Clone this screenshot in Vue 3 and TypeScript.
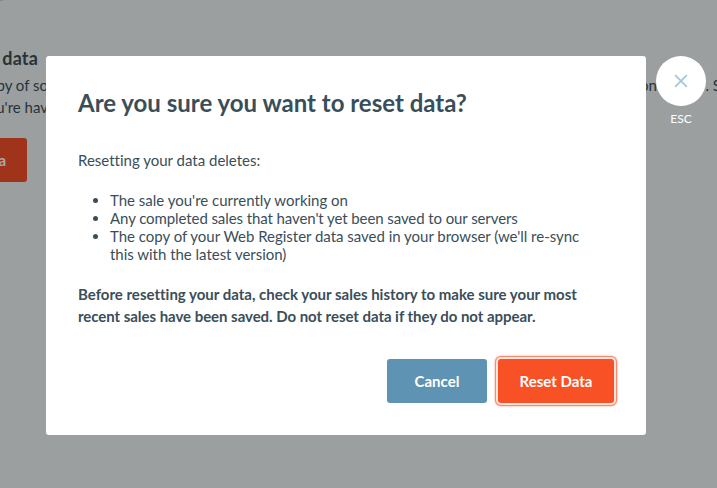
<script setup lang="ts">
interface Loss {
  text: string
  spacing: string
}

const losses: Loss[] = [
  { text: "The sale you're currently working on", spacing: '0px' },
  { text: "Any completed sales that haven't yet been saved to our servers", spacing: '-0.09px' },
  {
    text: "The copy of your Web Register data saved in your browser (we'll re-sync this with the latest version)",
    spacing: '-0.02px',
  },
]
</script>

<template>
  <div class="screen">
    <main class="page">
      <div class="page-mark"></div>
      <h2 class="page-title">data</h2>
      <div class="page-copy">
        <p class="copy-start">py of so</p>
        <p class="copy-end"><span>on</span><span>. S</span></p>
      </div>
      <p class="page-line">u're hav</p>
      <div class="page-action">a</div>
    </main>

    <div class="overlay">
      <section class="dialog" role="dialog">
        <h1>Are you sure you want to reset data?</h1>
        <p class="intro">Resetting your data deletes:</p>
        <ul>
          <li v-for="item in losses" :key="item.text" :style="{ letterSpacing: item.spacing }">{{ item.text }}</li>
        </ul>
        <p class="warning">
          Before resetting your data, check your sales history to make sure your most
          <span class="tight">recent sales have been saved. Do not reset data if they do not appear.</span>
        </p>
        <div class="actions">
          <button class="cancel" type="button">Cancel</button>
          <button class="reset" type="button">Reset Data</button>
        </div>
      </section>
      <div class="dismiss">
        <button class="close" type="button">
          <svg width="14" height="14" viewBox="0 0 14 14">
            <path d="M1.2 1.2 12.8 12.8M12.8 1.2 1.2 12.8" />
          </svg>
        </button>
        <span class="esc">ESC</span>
      </div>
    </div>
  </div>
</template>

<style>
body {
  margin: 0;
  overflow: hidden;
}
</style>

<style scoped>
.screen {
  width: 717px;
  height: 488px;
  overflow: hidden;
  position: relative;
  background: #9b9fa0;
  color: #3a4e5a;
  font-family: Lato, sans-serif;
  font-size: 15px;
  font-variant-ligatures: none;
}
h1,
h2,
p,
ul {
  margin: 0;
}
.page {
  color: #27333b;
}
.page-mark {
  width: 3px;
  height: 1px;
  margin-bottom: 46px;
  background: #81878a;
}
.page-title {
  width: 38px;
  display: flex;
  justify-content: flex-end;
  font-size: 18px;
  line-height: 22px;
  font-weight: 700;
  letter-spacing: 0.15px;
}
.page-copy {
  margin-top: 5px;
  display: flex;
  justify-content: space-between;
  line-height: 22px;
  white-space: nowrap;
}
.copy-start,
.page-line {
  width: 48px;
  display: flex;
  justify-content: flex-end;
  line-height: 22px;
  white-space: nowrap;
}
.copy-end {
  width: 77px;
  display: flex;
  justify-content: space-between;
}
.copy-end span:last-child {
  margin-right: -4px;
}
.page-action {
  box-sizing: border-box;
  width: 27px;
  height: 44px;
  margin-top: 20px;
  padding-right: 21px;
  display: flex;
  align-items: center;
  justify-content: flex-end;
  background: #9f341b;
  border-radius: 0 3px 3px 0;
  color: #a7a9a8;
  font-weight: 700;
}
.overlay {
  position: absolute;
  inset: 0;
  padding: 56px 0 0 46px;
  display: flex;
  align-items: flex-start;
  gap: 10px;
}
.dialog {
  box-sizing: border-box;
  flex: none;
  width: 600px;
  height: 379px;
  padding: 31px 32px 32px;
  background: #fff;
  border-radius: 3px;
}
h1 {
  font-size: 24px;
  line-height: 32px;
  font-weight: 700;
}
.intro {
  margin-top: 30px;
  line-height: 22px;
}
ul {
  margin-top: 20px;
  padding-left: 32px;
  padding-right: 32px;
  line-height: 18px;
}
.warning {
  margin-top: 20px;
  line-height: 22px;
  font-weight: 700;
}
.tight {
  display: block;
  letter-spacing: -0.045px;
}
.actions {
  margin-top: 32px;
  display: flex;
  justify-content: flex-end;
  gap: 11px;
}
button {
  border: 0;
  padding: 0;
  font: inherit;
}
.actions button {
  height: 44px;
  border-radius: 3px;
  color: #fff;
  font-weight: 700;
}
.actions .cancel {
  width: 100px;
  background: #5e93b3;
}
.actions .reset {
  width: 116px;
  background: #f85125;
  box-shadow: 0 0 0 2px #fee5df, 0 0 0 3px #fa8a6d, 0 0 2px 3px #fa8a6d;
}
.dismiss {
  width: 50px;
  display: flex;
  flex-direction: column;
  align-items: center;
}
.close {
  width: 50px;
  height: 50px;
  border-radius: 50%;
  background: #fff;
  display: flex;
  align-items: center;
  justify-content: center;
}
.close path {
  fill: none;
  stroke: #a4c7dc;
  stroke-width: 1.8;
}
.esc {
  margin-top: 5px;
  color: #fff;
  font-size: 12px;
  line-height: 16px;
}
</style>
